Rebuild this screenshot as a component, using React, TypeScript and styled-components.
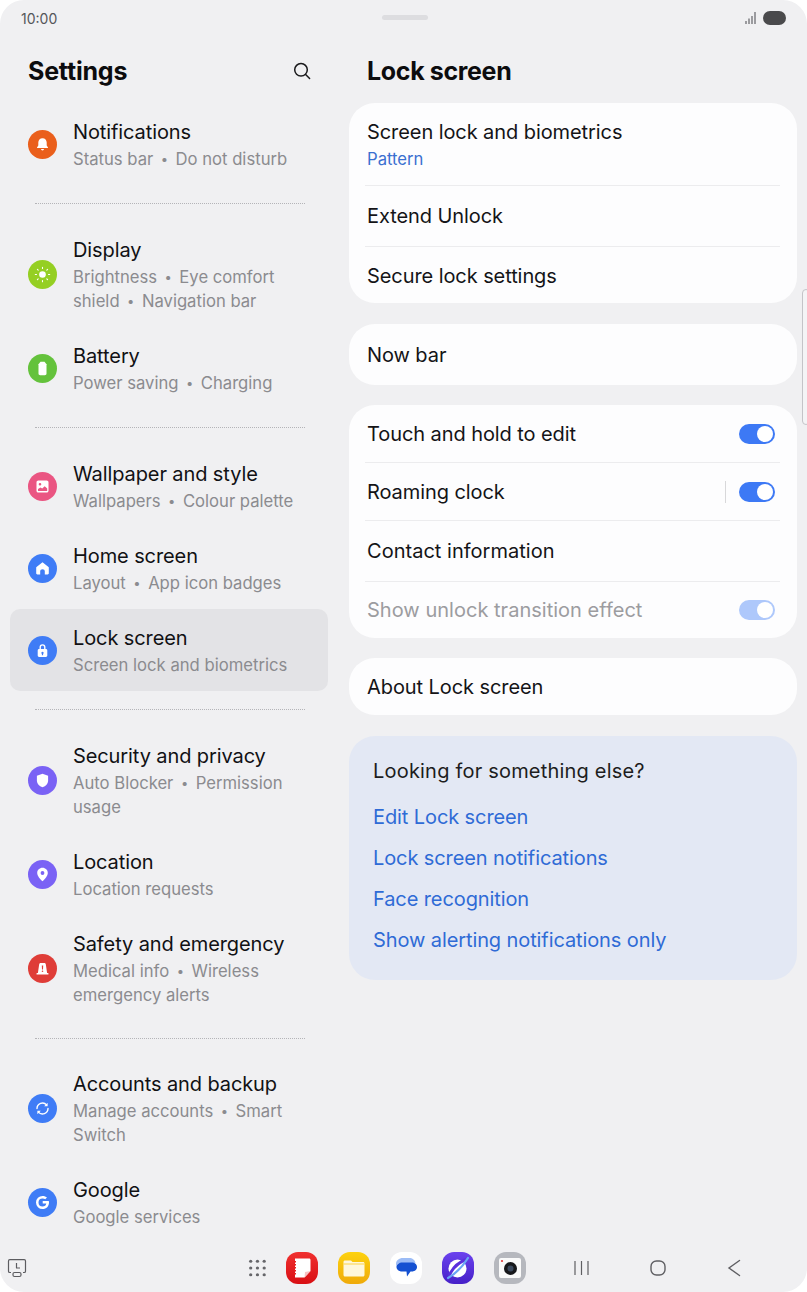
import React from "react";
import styled, { createGlobalStyle } from "styled-components";

const Global = createGlobalStyle`
  html, body { margin: 0; padding: 0; background: #fff; }
  body { font-family: Inter, "Noto Sans", "Liberation Sans", sans-serif; -webkit-font-smoothing: antialiased; }
  * { box-sizing: border-box; }
`;

const Screen = styled.div`
  position: relative;
  width: 807px;
  height: 1292px;
  background: #f0f0f2;
  border-radius: 24px;
  overflow: hidden;
  display: flex;
  flex-direction: column;
`;

const StatusBar = styled.div`
  height: 36px;
  padding: 0 21px;
  display: flex;
  align-items: center;
  justify-content: space-between;
  position: relative;
`;
const Clock = styled.span`
  font-size: 14px;
  color: #55565a;
`;
const Handle = styled.div`
  position: absolute;
  left: 382px;
  top: 15px;
  width: 46px;
  height: 5px;
  border-radius: 3px;
  background: #dddde0;
`;
const StatusIcons = styled.div`
  display: flex;
  align-items: center;
  gap: 6px;
`;

const Main = styled.div`
  flex: 1;
  min-height: 0;
  display: flex;
  gap: 21px;
  padding-left: 10px;
`;
const Left = styled.div`
  width: 318px;
  flex: none;
`;
const HeaderRow = styled.div`
  height: 67px;
  display: flex;
  align-items: center;
  justify-content: space-between;
  padding: 2px 16px 0 18px;
`;
const Heading = styled.h1`
  margin: 0;
  font-size: 25px;
  font-weight: 700;
  color: #0c0c0e;
  letter-spacing: -0.2px;
`;
const MenuRow = styled.div<{ $active?: boolean; $tall?: boolean }>`
  height: ${(p) => (p.$tall ? 106 : 82)}px;
  display: flex;
  align-items: center;
  gap: 16px;
  padding: 0 18px;
  border-radius: 10px;
  background: ${(p) => (p.$active ? "#e3e3e6" : "transparent")};
`;
const IconCircle = styled.div<{ $color: string }>`
  width: 29px;
  height: 29px;
  flex: none;
  border-radius: 50%;
  background: ${(p) => p.$color};
  display: flex;
  align-items: center;
  justify-content: center;
`;
const MenuText = styled.div`
  min-width: 0;
  padding-top: 2px;
`;
const MenuTitle = styled.div`
  font-size: 20px;
  line-height: 27px;
  color: #111114;
  letter-spacing: -0.1px;
  margin-bottom: 1px;
`;
const MenuSub = styled.div`
  font-size: 16.65px;
  line-height: 24px;
  color: #8b8b8f;
  white-space: nowrap;
`;
const Bullet = styled.span`
  font-size: 13px;
  margin: 0 7.5px;
  vertical-align: 1px;
`;
const Dots = styled.div<{ $tight?: boolean }>`
  height: 1px;
  margin: ${(p) => (p.$tight ? "17px 23px 16px 25px" : "18px 23px 17px 25px")};
  border-top: 1px dotted #b4b4b8;
`;

const Right = styled.div`
  width: 448px;
  flex: none;
`;
const RightHeading = styled(Heading)`
  height: 67px;
  line-height: 71px;
  padding-left: 18px;
  letter-spacing: -0.35px;
`;
const Card = styled.div<{ $gap?: number }>`
  background: #fdfdfe;
  border-radius: 26px;
  padding: 0 17px 0 16px;
  margin-bottom: ${(p) => p.$gap ?? 20}px;
`;
const CardRow = styled.div<{ $h: number; $line?: boolean; $shift?: number }>`
  height: ${(p) => p.$h}px;
  display: flex;
  align-items: center;
  justify-content: space-between;
  padding-left: 2px;
  padding-top: ${(p) => p.$shift ?? 0}px;
  border-top: ${(p) => (p.$line ? "1px solid #ececee" : "none")};
`;
const RowLabel = styled.span<{ $dim?: boolean; $wide?: boolean }>`
  font-size: 20px;
  color: ${(p) => (p.$dim ? "#9c9ca0" : "#141417")};
  letter-spacing: ${(p) => (p.$wide ? "0.02px" : "-0.08px")};
`;
const RowStack = styled.div`
  display: flex;
  flex-direction: column;
  padding: 1px 0 0 2px;
  height: 82px;
  justify-content: center;
  gap: 5px;
`;
const Value = styled.span`
  font-size: 16.65px;
  color: #3a6fd0;
`;
const Toggle = styled.div<{ $dim?: boolean }>`
  width: 36px;
  height: 20px;
  border-radius: 10px;
  background: ${(p) => (p.$dim ? "#aec8fb" : "#3d79f5")};
  position: relative;
  margin-right: 5px;
  &::after {
    content: "";
    position: absolute;
    right: 2px;
    top: 2px;
    width: 16px;
    height: 16px;
    border-radius: 50%;
    background: #fff;
  }
`;
const ToggleWrap = styled.div`
  display: flex;
  align-items: center;
`;
const VLine = styled.div`
  width: 1px;
  height: 22px;
  background: #d8d8da;
  margin-right: 13px;
`;
const InfoCard = styled.div`
  height: 244px;
  border-radius: 26px;
  background: #e3e8f4;
  padding: 21px 24px;
`;
const InfoTitle = styled.div`
  font-size: 20px;
  line-height: 28px;
  color: #1d1d20;
  letter-spacing: 0.2px;
  margin-bottom: 12px;
`;
const InfoLink = styled.div`
  font-size: 20px;
  line-height: 41px;
  color: #2f6bd6;
  letter-spacing: -0.1px;
`;

const Dock = styled.div`
  height: 48px;
  flex: none;
  display: flex;
  align-items: center;
  padding: 0 0 0 7px;
`;
const DockApps = styled.div`
  display: flex;
  align-items: center;
  margin-left: 221px;
  gap: 20px;
`;
const NavButtons = styled.div`
  display: flex;
  align-items: center;
  margin-left: 47px;
  gap: 60px;
`;
const ScrollThumb = styled.div`
  position: absolute;
  right: -3px;
  top: 289px;
  width: 8px;
  height: 136px;
  border: 1px solid #c4c4c8;
  border-radius: 4px;
  background: #f4f4f6;
`;

const G = (p: React.SVGProps<SVGSVGElement>) => (
  <svg width="17" height="17" viewBox="0 0 17 17" fill="#fff" {...p} />
);

const icons = {
  bell: (
    <G>
      <path d="M8.500 2.200c-2.600 0-4.200 2-4.200 4.400v3L3 11.400v.6h11v-.6l-1.300-1.800v-3c0-2.400-1.600-4.400-4.200-4.400z" />
      <path d="M7 13h3c0 .9-.6 1.400-1.500 1.400S7 13.900 7 13z" />
    </G>
  ),
  sun: (
    <G>
      <circle cx="8.500" cy="8.500" r="3.300" />
      <g stroke="#fff" strokeWidth="1.100" strokeLinecap="round">
        <path d="M8.500 1.300v1.200M8.500 14.500v1.200M1.300 8.500h1.200M14.500 8.500h1.200M3.400 3.400l.8.8M12.800 12.800l.8.8M3.400 13.600l.8-.8M12.800 4.200l.8-.8" />
      </g>
    </G>
  ),
  battery: (
    <G>
      <path d="M6.500 1.800h4l2 2.400v9.300c0 1-.7 1.700-1.700 1.700H6.200c-1 0-1.700-.7-1.700-1.700V4.200z" />
    </G>
  ),
  picture: (
    <G>
      <path
        fillRule="evenodd"
        d="M4.300 2.500h8.400c1 0 1.800.8 1.800 1.800v8.400c0 1-.8 1.800-1.800 1.800H4.300c-1 0-1.800-.8-1.800-1.800V4.300c0-1 .8-1.800 1.800-1.800zM6 5a1.300 1.300 0 100 2.600A1.300 1.300 0 006 5zm-2 8h9.200v-2.500l-2.500-2.200-2.500 2.300-1.700-1L4 11z"
      />
    </G>
  ),
  home: (
    <G>
      <path d="M8.500 2.300l6 4.700c.2.200.3.400.3.700v5.600c0 .6-.5 1.200-1.200 1.200h-2.800v-3.200c0-1.100-.9-2-2.300-2s-2.300.9-2.300 2v3.200H3.400c-.7 0-1.200-.6-1.200-1.200V7.700c0-.3.100-.5.300-.7z" />
    </G>
  ),
  lock: (
    <G>
      <path
        fillRule="evenodd"
        d="M5.500 7V5.200a3 3 0 016 0V7h.4c.8 0 1.400.6 1.400 1.400v5.200c0 .8-.6 1.400-1.400 1.400H5.100c-.8 0-1.400-.6-1.400-1.400V8.400C3.700 7.600 4.300 7 5.100 7zm1.400 0h3.200V5.200a1.600 1.600 0 00-3.200 0zm1.600 2.700a1.200 1.200 0 00-.6 2.200v1.300h1.200v-1.300a1.200 1.200 0 00-.6-2.200z"
      />
    </G>
  ),
  shield: (
    <G>
      <path d="M8.500 1.800l5.600 2v4.500c0 3.400-2.400 6-5.600 7-3.200-1-5.600-3.600-5.600-7V3.800z" />
    </G>
  ),
  pin: (
    <G>
      <path
        fillRule="evenodd"
        d="M8.500 1.800c3 0 5.300 2.300 5.300 5.100 0 3-2.900 6-5.300 8.300-2.400-2.300-5.300-5.300-5.300-8.300 0-2.800 2.300-5.100 5.300-5.100zm0 3.300a1.900 1.900 0 100 3.800 1.900 1.900 0 000-3.800z"
      />
    </G>
  ),
  siren: (
    <G>
      <path
        fillRule="evenodd"
        d="M6.800 3h3.400c.8 0 1.400.5 1.600 1.300l1.300 8.700H3.900l1.300-8.700C5.400 3.500 6 3 6.800 3zm1 2.600l.2 4h1l.2-4zM8.500 10.400a.8.800 0 100 1.600.8.800 0 000-1.600z"
      />
      <rect x="2.500" y="13" width="12" height="1.600" rx=".6" />
    </G>
  ),
  sync: (
    <G fill="none">
      <path
        d="M3 8.500a5.500 5.500 0 019.600-3.600M14 8.500a5.500 5.500 0 01-9.600 3.600"
        stroke="#fff"
        strokeWidth="1.400"
        strokeLinecap="round"
      />
      <path d="M13.600 2.800v3.400h-3.400zM3.400 14.200v-3.400h3.400z" fill="#fff" />
    </G>
  ),
  google: (
    <G>
      <path d="M8.700 7.100h6.100c.1.500.2 1 .2 1.500 0 3.800-2.600 6.500-6.400 6.500A6.600 6.600 0 018.600 1.900c1.800 0 3.300.6 4.400 1.700L11.200 5.300c-.7-.6-1.500-.9-2.600-.9a4.100 4.100 0 000 8.200c2.100 0 3.400-1.200 3.700-3h-3.600z" />
    </G>
  ),
};

type Item = { icon: keyof typeof icons; color: string; title: string; sub: React.ReactNode; tall?: boolean; active?: boolean };

const Sep = () => <Bullet>•</Bullet>;

const groups: Item[][] = [
  [{ icon: "bell", color: "#ea5f1c", title: "Notifications", sub: <>Status bar<Sep />Do not disturb</> }],
  [
    { icon: "sun", color: "#95cf23", title: "Display", sub: <>Brightness<Sep />Eye comfort<br />shield<Sep />Navigation bar</>, tall: true },
    { icon: "battery", color: "#64c23c", title: "Battery", sub: <>Power saving<Sep />Charging</> },
  ],
  [
    { icon: "picture", color: "#ea5582", title: "Wallpaper and style", sub: <>Wallpapers<Sep />Colour palette</> },
    { icon: "home", color: "#3f7cf6", title: "Home screen", sub: <>Layout<Sep />App icon badges</> },
    { icon: "lock", color: "#3f7cf6", title: "Lock screen", sub: "Screen lock and biometrics", active: true },
  ],
  [
    { icon: "shield", color: "#7a62f5", title: "Security and privacy", sub: <>Auto Blocker<Sep />Permission<br />usage</>, tall: true },
    { icon: "pin", color: "#7a62f5", title: "Location", sub: "Location requests" },
    { icon: "siren", color: "#df3d38", title: "Safety and emergency", sub: <>Medical info<Sep />Wireless<br />emergency alerts</>, tall: true },
  ],
  [
    { icon: "sync", color: "#3f7cf6", title: "Accounts and backup", sub: <>Manage accounts<Sep />Smart<br />Switch</>, tall: true },
    { icon: "google", color: "#3f7cf6", title: "Google", sub: "Google services" },
  ],
];

const App = () => (
  <Screen>
    <Global />
    <StatusBar>
      <Clock>10:00</Clock>
      <Handle />
      <StatusIcons>
        <svg width="12" height="12" viewBox="0 0 12 12" fill="#9b9b9f">
          <rect x="0" y="9" width="2" height="3" />
          <rect x="3" y="6.500" width="2" height="5.500" />
          <rect x="6" y="4" width="2" height="8" />
          <rect x="9" y="0" width="2" height="12" />
        </svg>
        <svg width="23" height="14" viewBox="0 0 23 14">
          <rect width="23" height="14" rx="7" fill="#4a4a4c" />
        </svg>
      </StatusIcons>
    </StatusBar>
    <Main>
      <Left>
        <HeaderRow>
          <Heading>Settings</Heading>
          <svg width="20" height="20" viewBox="0 0 20 20" fill="none" stroke="#1a1a1c" strokeWidth="1.500" strokeLinecap="round">
            <circle cx="9" cy="8.800" r="6.300" />
            <path d="M13.600 13.500l4 4" />
          </svg>
        </HeaderRow>
        {groups.map((group, i) => (
          <React.Fragment key={i}>
            {i > 0 && <Dots $tight={i === 4} />}
            {group.map((it) => (
              <MenuRow key={it.title} $active={it.active} $tall={it.tall}>
                <IconCircle $color={it.color}>{icons[it.icon]}</IconCircle>
                <MenuText>
                  <MenuTitle>{it.title}</MenuTitle>
                  <MenuSub>{it.sub}</MenuSub>
                </MenuText>
              </MenuRow>
            ))}
          </React.Fragment>
        ))}
      </Left>
      <Right>
        <RightHeading>Lock screen</RightHeading>
        <Card $gap={21}>
          <RowStack>
            <RowLabel>Screen lock and biometrics</RowLabel>
            <Value>Pattern</Value>
          </RowStack>
          <CardRow $h={61} $line><RowLabel>Extend Unlock</RowLabel></CardRow>
          <CardRow $h={57} $line $shift={2}><RowLabel>Secure lock settings</RowLabel></CardRow>
        </Card>
        <Card><CardRow $h={61}><RowLabel>Now bar</RowLabel></CardRow></Card>
        <Card>
          <CardRow $h={57}><RowLabel>Touch and hold to edit</RowLabel><Toggle /></CardRow>
          <CardRow $h={58} $line>
            <RowLabel>Roaming clock</RowLabel>
            <ToggleWrap><VLine /><Toggle /></ToggleWrap>
          </CardRow>
          <CardRow $h={61} $line><RowLabel $wide>Contact information</RowLabel></CardRow>
          <CardRow $h={57} $line><RowLabel $dim $wide>Show unlock transition effect</RowLabel><Toggle $dim /></CardRow>
        </Card>
        <Card $gap={21}><CardRow $h={57}><RowLabel>About Lock screen</RowLabel></CardRow></Card>
        <InfoCard>
          <InfoTitle>Looking for something else?</InfoTitle>
          <InfoLink>Edit Lock screen</InfoLink>
          <InfoLink>Lock screen notifications</InfoLink>
          <InfoLink>Face recognition</InfoLink>
          <InfoLink>Show alerting notifications only</InfoLink>
        </InfoCard>
      </Right>
    </Main>
    <Dock>
      <svg width="20" height="20" viewBox="0 0 20 20" fill="none" stroke="#5c5c60" strokeWidth="1.200" strokeLinejoin="round">
        <path d="M4 14.500H2.800c-.8 0-1.300-.5-1.300-1.300V3c0-.8.5-1.300 1.300-1.300h14.400c.8 0 1.300.5 1.300 1.300v10.200c0 .8-.5 1.300-1.300 1.300H16" />
        <rect x="6" y="14.500" width="8" height="4" rx="1.500" />
        <path d="M9.500 5v5h3.500" />
      </svg>
      <DockApps>
        <svg width="18" height="18" viewBox="0 0 20 20" fill="#66666a">
          {[2.5, 10, 17.5].flatMap((y) =>
            [3, 10.5, 18].map((x) => <circle key={`${x}-${y}`} cx={x} cy={y} r="1.800" />)
          )}
        </svg>
        <svg width="32" height="32" viewBox="0 0 32 32">
          <defs>
            <linearGradient id="rd" x1="0" y1="0" x2="0" y2="1">
              <stop offset="0" stopColor="#f0302f" />
              <stop offset="1" stopColor="#d80f14" />
            </linearGradient>
          </defs>
          <rect width="32" height="32" rx="12" fill="url(#rd)" />
          <path d="M9 6.500h14c1 0 1.500.6 1.500 1.500v11l-6 6.500H9z" fill="#fff" />
          <path d="M18.500 25.500l.5-5.500 5.500-1z" fill="#f7c3c3" />
          <path d="M9 9v14" stroke="#e8201f" strokeWidth="2" strokeDasharray="1.500 1.500" />
        </svg>
        <svg width="32" height="32" viewBox="0 0 32 32">
          <defs>
            <linearGradient id="fy" x1="0" y1="0" x2="0" y2="1">
              <stop offset="0" stopColor="#fdd20f" />
              <stop offset="1" stopColor="#efaa0a" />
            </linearGradient>
          </defs>
          <rect width="32" height="32" rx="12" fill="url(#fy)" />
          <path d="M5.500 10c0-1 .7-1.500 1.500-1.500h6l1.500 1.500H25c1 0 1.500.6 1.500 1.500V23c0 .8-.7 1.500-1.500 1.500H7c-.8 0-1.500-.7-1.500-1.500z" fill="#fef7dd" />
          <path d="M5.500 12h21" stroke="#fbd34a" strokeWidth="1" />
        </svg>
        <svg width="32" height="32" viewBox="0 0 32 32">
          <rect width="32" height="32" rx="12" fill="#fff" />
          <path d="M6 12c0-3.500 3-6 7-6h6c3.500 0 6 2 6.500 5H10c-2 0-3.500 1.500-3.500 3.500z" fill="#9cbcf6" />
          <path d="M12.500 10.500h9c3.500 0 5.500 2 5.500 4.500s-2 4.500-5.500 4.500h-1l-3.500 5-.5-5h-4.500C9 19.500 6.500 17.500 6.500 15s2.500-4.500 6-4.500z" fill="#1450d2" />
        </svg>
        <svg width="32" height="32" viewBox="0 0 32 32">
          <defs>
            <linearGradient id="br" x1="0" y1="0" x2="0" y2="1">
              <stop offset="0" stopColor="#6b42ee" />
              <stop offset="1" stopColor="#4620c8" />
            </linearGradient>
          </defs>
          <rect width="32" height="32" rx="12" fill="url(#br)" />
          <circle cx="15.500" cy="16.500" r="9" fill="#fff" />
          <path d="M7 24C10 17 15 11 24 7.500" fill="none" stroke="#5b30dc" strokeWidth="3" />
          <path d="M6 26C13 22 21 14 26 6" fill="none" stroke="#6aa5f5" strokeWidth="2.200" strokeLinecap="round" />
        </svg>
        <svg width="32" height="32" viewBox="0 0 32 32">
          <rect width="32" height="32" rx="12" fill="#b6b8be" />
          <rect x="5" y="6" width="22" height="20" rx="2" fill="#fafafa" />
          <circle cx="16.500" cy="16.500" r="6.500" fill="#17181b" />
          <circle cx="16.500" cy="16.500" r="3" fill="#3c4a5e" />
          <circle cx="8" cy="9" r="1.100" fill="#e23a3a" />
        </svg>
      </DockApps>
      <NavButtons>
        <svg width="17" height="16" viewBox="0 0 17 16" stroke="#5f5f63" strokeWidth="1.200" fill="none">
          <path d="M2 1v14M8.500 1v14M15 1v14" />
        </svg>
        <svg width="16" height="16" viewBox="0 0 16 16" stroke="#5f5f63" strokeWidth="1.400" fill="none">
          <rect x="1" y="1" width="14" height="14" rx="5.500" />
        </svg>
        <svg width="16" height="18" viewBox="0 0 16 18" stroke="#5f5f63" strokeWidth="1.400" fill="none" strokeLinecap="round">
          <path d="M13.500 1.500L3 9l10.500 7.500" />
        </svg>
      </NavButtons>
    </Dock>
    <ScrollThumb />
  </Screen>
);

export default App;
